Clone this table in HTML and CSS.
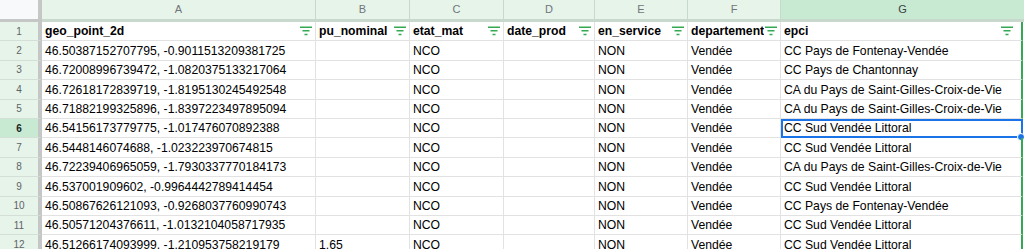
FILE: index.html
```html
<!DOCTYPE html>
<html lang="fr">
<head>
<meta charset="utf-8">
<title>Sheet</title>
<link rel="stylesheet" href="styles.css">
</head>
<body>
<div class="sheet">
  <div class="row head">
    <div class="corner"></div>
    <div class="colhdr">A</div>
    <div class="colhdr">B</div>
    <div class="colhdr">C</div>
    <div class="colhdr">D</div>
    <div class="colhdr">E</div>
    <div class="colhdr">F</div>
    <div class="colhdr sel">G</div>
  </div>
  <div class="row">
    <div class="rownum">1</div>
    <div class="cell th"><span class="t">geo_point_2d</span><svg class="flt" viewBox="0 0 12 10"><path d="M0 1.2H12M2.5 4.8H9.5M4.5 8.4H7.5"/></svg></div>
    <div class="cell th"><span class="t">pu_nominal</span><svg class="flt" viewBox="0 0 12 10"><path d="M0 1.2H12M2.5 4.8H9.5M4.5 8.4H7.5"/></svg></div>
    <div class="cell th"><span class="t">etat_mat</span><svg class="flt" viewBox="0 0 12 10"><path d="M0 1.2H12M2.5 4.8H9.5M4.5 8.4H7.5"/></svg></div>
    <div class="cell th"><span class="t">date_prod</span><svg class="flt" viewBox="0 0 12 10"><path d="M0 1.2H12M2.5 4.8H9.5M4.5 8.4H7.5"/></svg></div>
    <div class="cell th"><span class="t">en_service</span><svg class="flt" viewBox="0 0 12 10"><path d="M0 1.2H12M2.5 4.8H9.5M4.5 8.4H7.5"/></svg></div>
    <div class="cell th"><span class="t">departement</span><svg class="flt" viewBox="0 0 12 10"><path d="M0 1.2H12M2.5 4.8H9.5M4.5 8.4H7.5"/></svg></div>
    <div class="cell th last"><span class="t">epci</span><svg class="flt gap" viewBox="0 0 12 10"><path d="M0 1.2H12M2.5 4.8H9.5M4.5 8.4H7.5"/></svg></div>
  </div>
  <div class="row">
    <div class="rownum">2</div>
    <div class="cell">46.50387152707795, -0.9011513209381725</div>
    <div class="cell"></div><div class="cell">NCO</div><div class="cell"></div><div class="cell">NON</div><div class="cell">Vendée</div>
    <div class="cell last">CC Pays de Fontenay-Vendée</div>
  </div>
  <div class="row">
    <div class="rownum">3</div>
    <div class="cell">46.72008996739472, -1.0820375133217064</div>
    <div class="cell"></div><div class="cell">NCO</div><div class="cell"></div><div class="cell">NON</div><div class="cell">Vendée</div>
    <div class="cell last">CC Pays de Chantonnay</div>
  </div>
  <div class="row">
    <div class="rownum">4</div>
    <div class="cell">46.72618172839719, -1.8195130245492548</div>
    <div class="cell"></div><div class="cell">NCO</div><div class="cell"></div><div class="cell">NON</div><div class="cell">Vendée</div>
    <div class="cell last">CA du Pays de Saint-Gilles-Croix-de-Vie</div>
  </div>
  <div class="row">
    <div class="rownum">5</div>
    <div class="cell">46.71882199325896, -1.8397223497895094</div>
    <div class="cell"></div><div class="cell">NCO</div><div class="cell"></div><div class="cell">NON</div><div class="cell">Vendée</div>
    <div class="cell last">CA du Pays de Saint-Gilles-Croix-de-Vie</div>
  </div>
  <div class="row">
    <div class="rownum cur">6</div>
    <div class="cell">46.54156173779775, -1.017476070892388</div>
    <div class="cell"></div><div class="cell">NCO</div><div class="cell"></div><div class="cell">NON</div><div class="cell">Vendée</div>
    <div class="cell last active">CC Sud Vendée Littoral<span class="handle"></span></div>
  </div>
  <div class="row">
    <div class="rownum">7</div>
    <div class="cell">46.5448146074688, -1.023223970674815</div>
    <div class="cell"></div><div class="cell">NCO</div><div class="cell"></div><div class="cell">NON</div><div class="cell">Vendée</div>
    <div class="cell last">CC Sud Vendée Littoral</div>
  </div>
  <div class="row">
    <div class="rownum">8</div>
    <div class="cell">46.72239406965059, -1.7930337770184173</div>
    <div class="cell"></div><div class="cell">NCO</div><div class="cell"></div><div class="cell">NON</div><div class="cell">Vendée</div>
    <div class="cell last">CA du Pays de Saint-Gilles-Croix-de-Vie</div>
  </div>
  <div class="row">
    <div class="rownum">9</div>
    <div class="cell">46.537001909602, -0.9964442789414454</div>
    <div class="cell"></div><div class="cell">NCO</div><div class="cell"></div><div class="cell">NON</div><div class="cell">Vendée</div>
    <div class="cell last">CC Sud Vendée Littoral</div>
  </div>
  <div class="row">
    <div class="rownum">10</div>
    <div class="cell">46.50867626121093, -0.9268037760990743</div>
    <div class="cell"></div><div class="cell">NCO</div><div class="cell"></div><div class="cell">NON</div><div class="cell">Vendée</div>
    <div class="cell last">CC Pays de Fontenay-Vendée</div>
  </div>
  <div class="row">
    <div class="rownum">11</div>
    <div class="cell">46.50571204376611, -1.0132104058717935</div>
    <div class="cell"></div><div class="cell">NCO</div><div class="cell"></div><div class="cell">NON</div><div class="cell">Vendée</div>
    <div class="cell last">CC Sud Vendée Littoral</div>
  </div>
  <div class="row">
    <div class="rownum">12</div>
    <div class="cell">46.51266174093999, -1.210953758219179</div>
    <div class="cell">1.65</div><div class="cell">NCO</div><div class="cell"></div><div class="cell">NON</div><div class="cell">Vendée</div>
    <div class="cell last">CC Sud Vendée Littoral</div>
  </div>
</div>
</body>
</html>
```

FILE: styles.css
```css
html, body {
  margin: 0;
  padding: 0;
  background: #fff;
  overflow: hidden;
}
.sheet {
  width: 1024px;
  font-family: "Liberation Sans", Arial, sans-serif;
  font-size: 12.2px;
  color: #000;
}
.row {
  display: grid;
  grid-template-columns: 42px 274px 94px 94px 91px 93px 93px 1fr;
  height: 19.4px;
}
.row.head {
  height: 22px;
}
.corner {
  background: #f8f9fa;
  border-right: 4px solid #c4c7c5;
  border-bottom: 3px solid #c4c7c5;
  box-sizing: border-box;
}
.colhdr {
  box-sizing: border-box;
  background: #e6f4ea;
  border-right: 1px solid #c7d9cc;
  border-bottom: 3px solid #c9d8cd;
  color: #70757a;
  font-size: 11px;
  display: flex;
  align-items: center;
  justify-content: center;
  padding-bottom: 1px;
}
.colhdr.sel {
  background: #c9ead2;
  color: #3c4043;
  border-right: none;
}
.rownum {
  box-sizing: border-box;
  background: #e6f4ea;
  border-right: 4px solid #c4c7c5;
  border-bottom: 1px solid #d4e0d7;
  color: #5f6368;
  font-size: 10px;
  display: flex;
  align-items: center;
  justify-content: center;
}
.rownum.cur {
  background: #c9ead2;
  color: #202124;
  font-weight: bold;
}
.cell {
  box-sizing: border-box;
  border-right: 1px solid #e2e2e2;
  border-bottom: 1px solid #e2e2e2;
  padding: 0 3px;
  white-space: nowrap;
  overflow: hidden;
  display: flex;
  align-items: flex-end;
  padding-bottom: 2px;
  line-height: 14px;
  position: relative;
}
.cell.last {
  border-right: 2px solid #34a853;
  margin-right: 1px;
  overflow: visible;
}
.cell.th {
  font-weight: bold;
  align-items: center;
  padding-bottom: 0;
}
.cell.th .t {
  flex: 1;
  overflow: hidden;
  white-space: nowrap;
}
.flt {
  flex: none;
  width: 12px;
  height: 10px;
  margin-left: 1px;
}
.flt.gap {
  margin-right: 5px;
}
.flt path {
  stroke: #34a853;
  stroke-width: 1.5;
  fill: none;
}
.cell.active {
  outline: 2px solid #1a73e8;
  outline-offset: -2px;
}
.handle {
  position: absolute;
  right: -4px;
  bottom: -4px;
  width: 6px;
  height: 6px;
  border-radius: 50%;
  background: #1a73e8;
  border: 1px solid #fff;
}
```
